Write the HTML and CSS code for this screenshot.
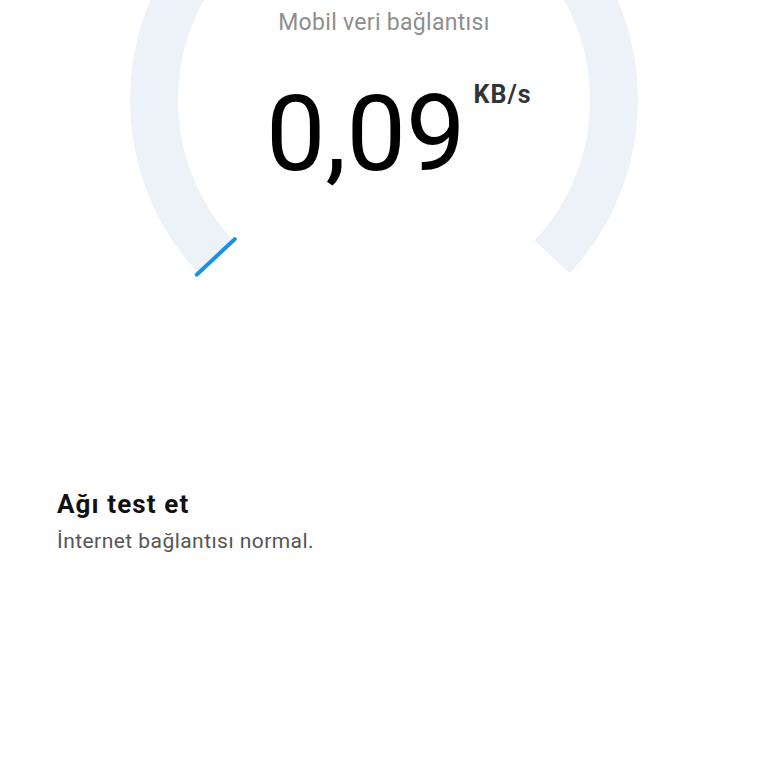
FILE: index.html
```html
<!DOCTYPE html>
<html lang="tr">
<head>
<meta charset="utf-8">
<link rel="stylesheet" href="styles.css">
</head>
<body>
<div class="page">
  <section class="gauge">
    <svg class="gauge-svg" width="768" height="300" viewBox="0 0 768 300">
      <path d="M 215.8 256.9 A 230 230 0 1 1 552.2 256.9" fill="none" stroke="#edf2f9" stroke-width="48"/>
      <line x1="196.8" y1="274.6" x2="234.8" y2="239.1" stroke="#1a8fe6" stroke-width="4" stroke-linecap="round"/>
    </svg>
    <div class="gauge-title">Mobil veri bağlantısı</div>
    <div class="speed-row">
      <span class="speed-value">0,09</span>
      <span class="speed-unit">KB/s</span>
    </div>
  </section>
  <section class="test">
    <div class="test-title">Ağı test et</div>
    <div class="test-desc">İnternet bağlantısı normal.</div>
  </section>
</div>
</body>
</html>
```

FILE: styles.css
```css
html, body {
  margin: 0;
  padding: 0;
  background: #ffffff;
}
body {
  font-family: Roboto, "Noto Sans", "Liberation Sans", sans-serif;
  width: 768px;
  height: 768px;
  overflow: hidden;
}
.page {
  display: flex;
  flex-direction: column;
}
.gauge {
  position: relative;
  height: 300px;
  display: flex;
  flex-direction: column;
}
.gauge-svg {
  position: absolute;
  left: 0;
  top: 0;
}
.gauge-title {
  position: relative;
  padding-top: 10px;
  font-size: 23px;
  line-height: 26px;
  letter-spacing: 0.3px;
  color: #8e8e8e;
  text-align: center;
}
.speed-row {
  position: relative;
  display: flex;
  align-items: flex-start;
  padding-left: 266px;
  margin-top: 45px;
}
.speed-value {
  font-size: 106px;
  line-height: 106px;
  color: #000000;
  font-weight: 400;
}
.speed-unit {
  margin-left: 8px;
  margin-top: 1px;
  font-size: 25px;
  line-height: 25px;
  letter-spacing: 1px;
  font-weight: 700;
  color: #333333;
}
.test {
  padding-left: 57px;
  padding-top: 189px;
  display: flex;
  flex-direction: column;
}
.test-title {
  font-size: 26px;
  line-height: 30px;
  letter-spacing: 1.1px;
  font-weight: 700;
  color: #111111;
}
.test-desc {
  margin-top: 10px;
  font-size: 21px;
  line-height: 24px;
  letter-spacing: 0.45px;
  color: #555555;
}
```
